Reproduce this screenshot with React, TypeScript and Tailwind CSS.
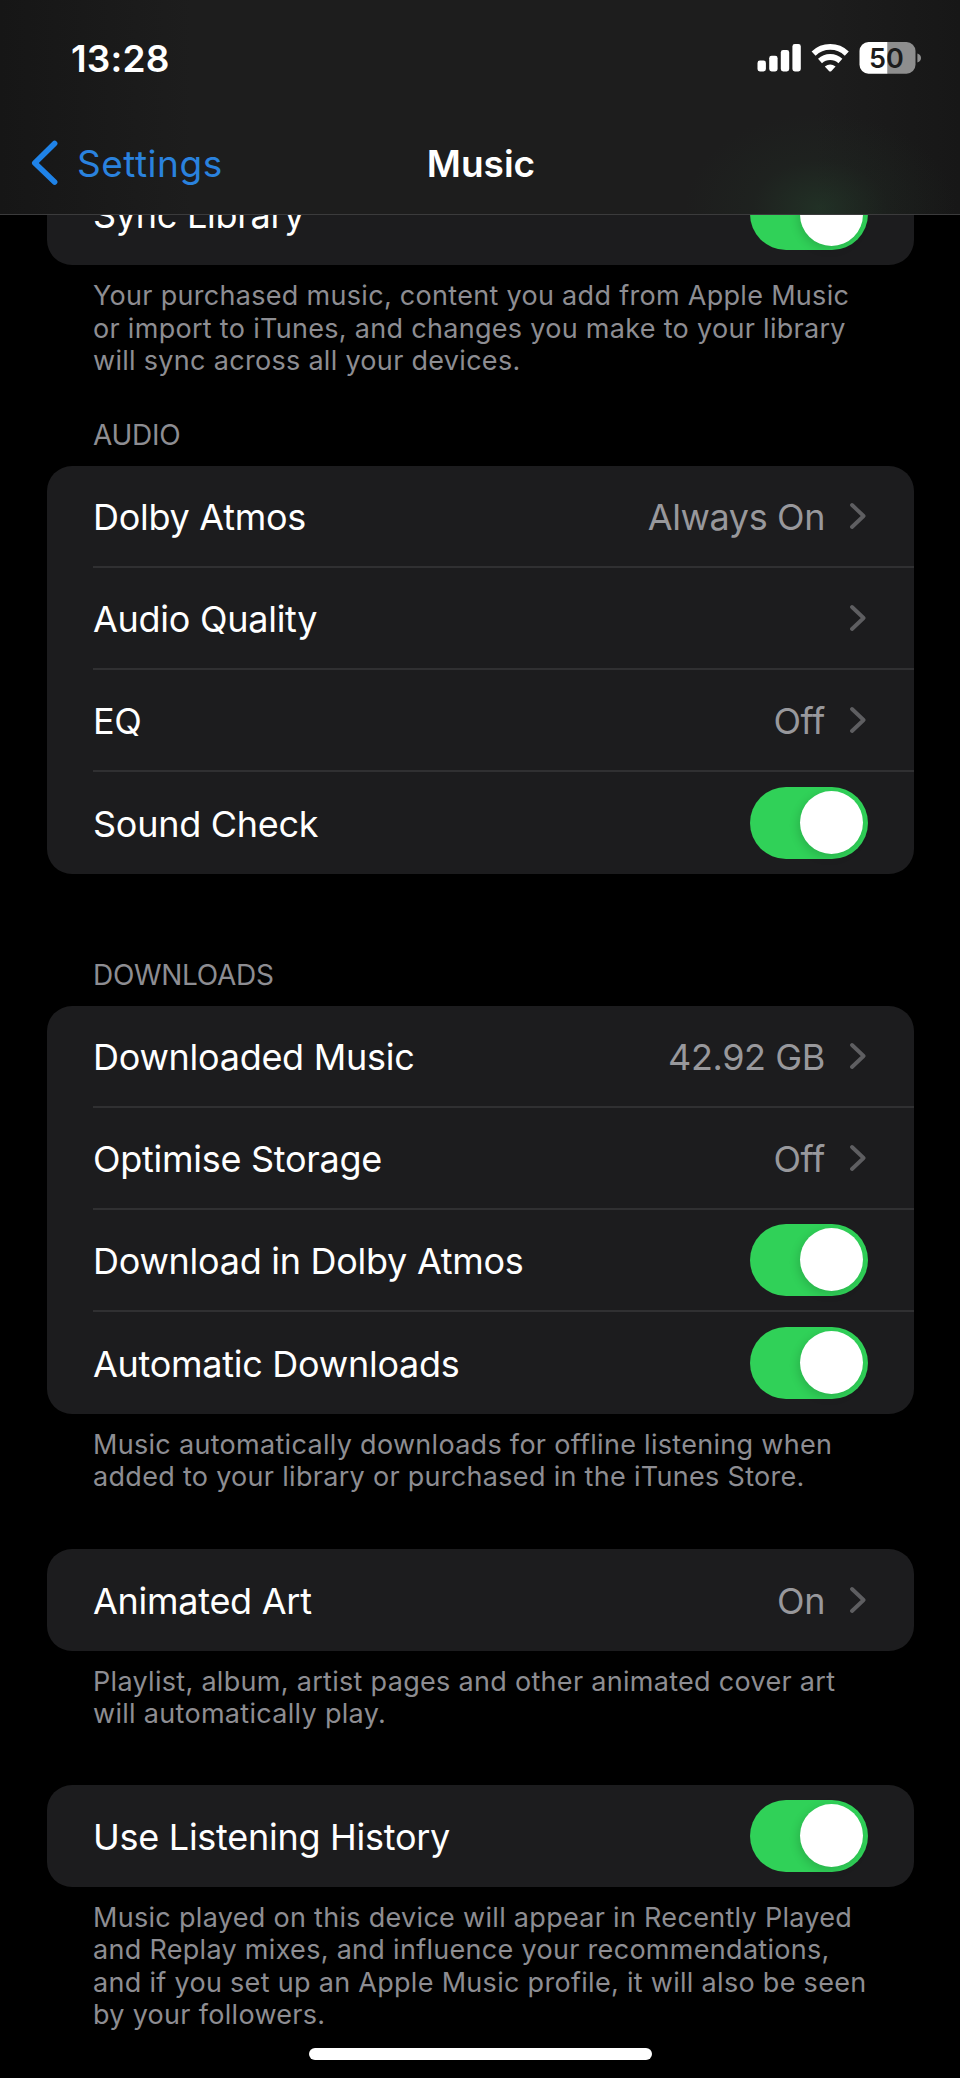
import type { ReactNode } from "react"

const Toggle = () => (
    <div className="flex h-[72px] w-[118px] items-center justify-end rounded-full bg-[#30d158] pr-[5px]">
        <div className="size-[63px] rounded-full bg-white shadow-[-2px_3px_10px_rgba(0,0,0,0.15)]" />
    </div>
)

const Disclosure = ({ value }: { value?: string }) => (
    <div className="flex items-center">
        {value && <span className="pt-[2px] text-[36px] tracking-[-0.4px] text-[#98989c]">{value}</span>}
        <svg className="ml-[25px] mr-[2px] h-[28px] w-[16px]" viewBox="0 0 16 28" fill="none" stroke="#5e5e61" strokeWidth="3.8" strokeLinecap="round" strokeLinejoin="round">
            <path d="M2 3 L13.6 14 L2 25" />
        </svg>
    </div>
)

const Row = ({ label, children, last }: { label: string; children: ReactNode; last?: boolean }) => (
    <div className="h-[102px] pl-[46px]">
        <div className={last ? "flex h-full items-center justify-between pr-[46px]" : "flex h-full items-center justify-between border-b-2 border-[#303032] pr-[46px]"}>
            <span className="pt-[2px] text-[36px] tracking-[-0.27px] text-white">{label}</span>
            {children}
        </div>
    </div>
)

const Card = ({ children }: { children: ReactNode }) => (
    <div className="overflow-hidden rounded-[25px] bg-[#1c1c1e]">{children}</div>
)

const Heading = ({ children }: { children: ReactNode }) => (
    <h2 className="mb-[13px] pl-[46px] text-[28px] leading-[35px] tracking-[-0.3px] text-[#8d8d92]">{children}</h2>
)

const Note = ({ lines }: { lines: string[] }) => (
    <div className="pl-[46px] pt-[15px] text-[27px] leading-[32.5px] tracking-[0.3px] text-[#8d8d92]">
        {lines.map((line) => (
            <p key={line} className="whitespace-nowrap">{line}</p>
        ))}
    </div>
)

const StatusIcons = () => (
    <svg className="h-[34px] w-[166px]" viewBox="757 41 166 34">
        {/* Cellular */}
        <g fill="#fff">
            <rect x="757.5" y="60.5" width="8.4" height="11" rx="2.4" />
            <rect x="769.2" y="55.8" width="8.4" height="15.7" rx="2.4" />
            <rect x="780.8" y="50" width="8.4" height="21.5" rx="2.4" />
            <rect x="792.4" y="44" width="8.4" height="27.5" rx="2.4" />
        </g>
        {/* Wi-Fi */}
        <g fill="none" stroke="#fff" strokeWidth="5.8">
            <path d="M813.6 53.6 A24 24 0 0 1 846.8 53.6" />
            <path d="M820 61 A15 15 0 0 1 840.4 61" />
        </g>
        <path d="M824.8 66.6 Q830.2 62.4 835.6 66.6 L831.2 71.2 Q830.2 72 829.2 71.2 Z" fill="#fff" />
        {/* Battery */}
        <path d="M887.5 42 H906.5 A9 9 0 0 1 915.5 51 V64.7 A9 9 0 0 1 906.5 73.7 H887.5 Z" fill="#8e8e8e" />
        <path d="M887.5 42 H868.5 A9 9 0 0 0 859.5 51 V64.7 A9 9 0 0 0 868.5 73.7 H887.5 Z" fill="#fff" />
        <path d="M917.4 53.4 Q921 54.8 921 58 Q921 61.2 917.4 62.6 Z" fill="#8e8e8e" />
        <text x="886.5" y="67.8" textAnchor="middle" fontSize="27" fontWeight="600" fill="#1c1c1c">50</text>
    </svg>
)

export default function App() {
    return (
        <div className="relative flex h-[2078px] w-[960px] flex-col overflow-hidden bg-black font-['Inter','Liberation_Sans',sans-serif]">
            <header className="relative z-10 h-[215px] shrink-0 border-b border-[#3b3b3c] bg-[linear-gradient(90deg,#161616_0%,#1d1d1d_20%,#1d1d1d_85%,#171717_100%)]">
                <div className="h-full bg-[radial-gradient(ellipse_135px_95px_at_820px_208px,rgba(38,68,46,0.5),rgba(34,50,38,0.22)_50%,transparent)]">
                    <div className="flex h-[116px] items-center justify-between pl-[71px] pr-[37px]">
                        <span className="pt-px text-[37px] font-semibold tracking-[0.2px] text-white">13:28</span>
                        <StatusIcons />
                    </div>
                    <div className="grid h-[94px] grid-cols-3 items-center">
                        <div className="flex items-center pl-[31px]">
                            <svg className="h-[46px] w-[28px]" viewBox="0 0 28 46" fill="none" stroke="#1f83e8" strokeWidth="5.6" strokeLinecap="round" strokeLinejoin="round">
                                <path d="M23.6 3.5 L3.8 23 L23.6 42" />
                            </svg>
                            <span className="ml-[18px] pt-px text-[37px] tracking-[0.5px] text-[#2a82de]">Settings</span>
                        </div>
                        <h1 className="pl-[2px] pt-px text-center text-[37px] font-semibold text-white">Music</h1>
                    </div>
                </div>
            </header>

            <main className="-mt-[52px] pl-[47px] pr-[46px]">
                <Card>
                    <Row label="Sync Library" last><Toggle /></Row>
                </Card>
                <Note
                    lines={[
                        "Your purchased music, content you add from Apple Music",
                        "or import to iTunes, and changes you make to your library",
                        "will sync across all your devices.",
                    ]}
                />

                <section className="mt-[40px]">
                    <Heading>AUDIO</Heading>
                    <Card>
                        <Row label="Dolby Atmos"><Disclosure value="Always On" /></Row>
                        <Row label="Audio Quality"><Disclosure /></Row>
                        <Row label="EQ"><Disclosure value="Off" /></Row>
                        <Row label="Sound Check" last><Toggle /></Row>
                    </Card>
                </section>

                <section className="mt-[84px]">
                    <Heading>DOWNLOADS</Heading>
                    <Card>
                        <Row label="Downloaded Music"><Disclosure value="42.92 GB" /></Row>
                        <Row label="Optimise Storage"><Disclosure value="Off" /></Row>
                        <Row label="Download in Dolby Atmos"><Toggle /></Row>
                        <Row label="Automatic Downloads" last><Toggle /></Row>
                    </Card>
                    <Note
                        lines={[
                            "Music automatically downloads for offline listening when",
                            "added to your library or purchased in the iTunes Store.",
                        ]}
                    />
                </section>

                <section className="mt-[55px]">
                    <Card>
                        <Row label="Animated Art" last><Disclosure value="On" /></Row>
                    </Card>
                    <Note lines={["Playlist, album, artist pages and other animated cover art", "will automatically play."]} />
                </section>

                <section className="mt-[54px]">
                    <Card>
                        <Row label="Use Listening History" last><Toggle /></Row>
                    </Card>
                    <Note
                        lines={[
                            "Music played on this device will appear in Recently Played",
                            "and Replay mixes, and influence your recommendations,",
                            "and if you set up an Apple Music profile, it will also be seen",
                            "by your followers.",
                        ]}
                    />
                </section>
            </main>

            {/* Home indicator */}
            <div className="absolute bottom-[18px] left-[309px] h-[12px] w-[343px] rounded-full bg-white" />
        </div>
    )
}
